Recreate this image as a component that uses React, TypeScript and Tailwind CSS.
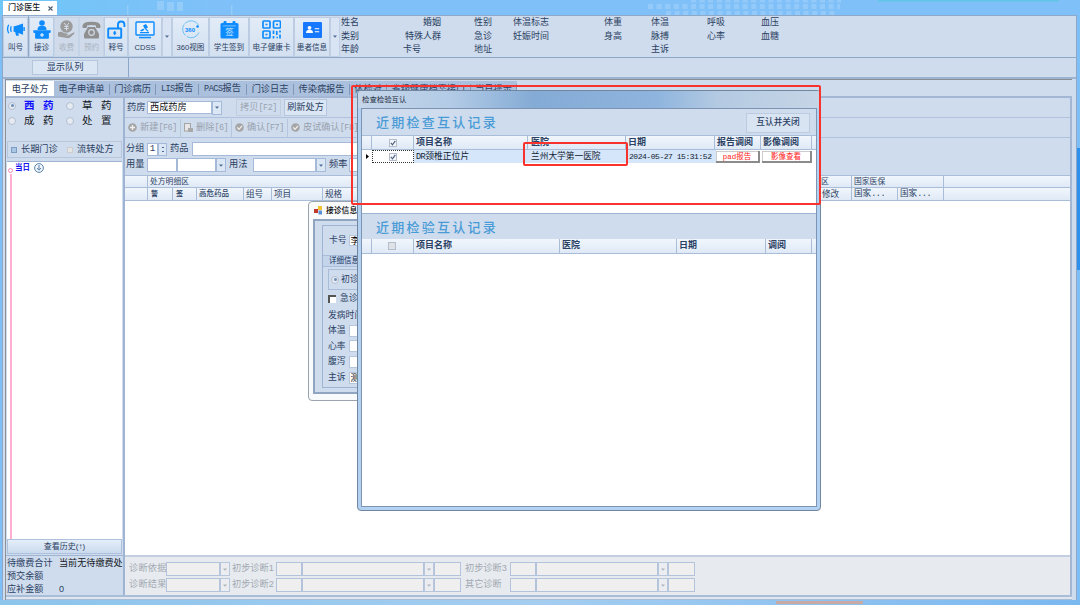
import React from 'react';
import { clsx } from 'clsx';

const Down = ({ c = '#4b6a95' }: { c?: string }) => (
  <svg width="4" height="3" viewBox="0 0 4 3" className="shrink-0">
    <path d="M0 .4h4L2 2.8z" fill={c} />
  </svg>
);

const B = '#0d8bff';
const icons: Record<string, React.ReactNode> = {
  horn: (
    <svg width="19" height="17" viewBox="0 0 20 18" fill={B}>
      <path d="M8 5.500v6l2 .2 8 2.800V2.700L10 5.300z" />
      <path d="M9.500 11h3.300l.7 4.500h-2.800z" />
      <rect x="18.300" y="6.300" width="1.600" height="4.400" rx=".7" />
      <path d="M5.600 5.500q-1.400 3 0 6M2.800 4q-2.400 4.500 0 9" fill="none" stroke={B} strokeWidth="1.400" />
    </svg>
  ),
  doctor: (
    <svg width="18" height="19" viewBox="0 0 18 19" fill={B}>
      <circle cx="9" cy="3" r="2.800" />
      <path d="M4.500 10q0-4 3-4h3q3 0 3 4zM.3 10.300h17.400v1.800q0 1-1 1h-.8V18q0 .8-.8.8H2.900q-.8 0-.8-.8v-4.900h-.8q-1 0-1-1z" />
      <path d="M9 13v4M7 15h4" stroke="#fff" strokeWidth="1" />
    </svg>
  ),
  fee: (
    <svg width="19" height="19" viewBox="0 0 19 19">
      <circle cx="9.500" cy="6.500" r="6.200" fill="#9b9b9b" />
      <path d="M7 3l2.500 3L12 3M9.500 6v4.500M7.300 6.500h4.400M7.300 8.500h4.400" stroke="#d3dbe6" fill="none" />
      <path d="M1 12.500q3-1.500 5 0 2 1.200 4.500 1 1 1-.5 1.500H7.500l3.500.5 5.500-3q1.500-.3 1 1L13 17.500q-1 .8-3 .6L1 16.500z" fill="#9b9b9b" />
    </svg>
  ),
  phone: (
    <svg width="19" height="18" viewBox="0 0 19 18">
      <path d="M.5 5q0-4.300 9-4.300t9 4.300v1.200q-.1.800-1 .8h-2.600q-.9 0-.9-1V4.600q-4.500-1.200-9 0V6q0 1-.9 1H1.500q-1 0-1-.8z" fill="#8f8f8f" />
      <path d="M6 6h7l4 7v3.500q0 1-1 1H3q-1 0-1-1V13z" fill="#8f8f8f" />
      <circle cx="9.500" cy="11.500" r="2.800" fill="none" stroke="#d3dbe6" strokeWidth="1.200" />
    </svg>
  ),
  unlock: (
    <svg width="19" height="19" viewBox="0 0 19 19" fill="none" stroke={B} strokeWidth="1.900">
      <rect x="1.200" y="8.500" width="13" height="9.300" rx=".6" />
      <path d="M11 8V4.500q0-3 3.200-3t3.200 3V7" />
      <path d="M7.700 11v4M6.200 13h3" strokeWidth="1.500" />
    </svg>
  ),
  cdss: (
    <svg width="20" height="18" viewBox="0 0 20 18" fill={B}>
      <rect x="1" y="1" width="18" height="13" rx=".8" fill="#e9f3fd" stroke={B} strokeWidth="1.400" />
      <path d="M8 4.500l3-1.500 2 3.500-3 1.700zM5 9.500l3.500-2 .8 1.400-2.800 1.600zM5 11h9v1.200H5zM11 7.500l2.700 2.500-1 .8-2.500-2.500z" />
      <rect x="4" y="15.800" width="12" height="1.500" />
    </svg>
  ),
  deg: (
    <svg width="20" height="19" viewBox="0 0 20 19">
      <path d="M17.500 5A8.500 8.500 0 1 0 18 12.500" fill="none" stroke="#6cc1f5" strokeWidth="1" strokeDasharray="16 1 12 2" />
      <text x="4" y="11.500" fontSize="6" fontWeight="700" fontFamily="Liberation Sans" fill={B}>360</text>
      <circle cx="16.600" cy="6.500" r="1.300" fill={B} />
    </svg>
  ),
  sign: (
    <svg width="19" height="18" viewBox="0 0 19 18">
      <rect x=".5" y="2" width="18" height="15.500" rx="1.500" fill={B} />
      <rect x="3.500" y="0" width="3" height="4.500" rx="1" fill={B} />
      <rect x="12.500" y="0" width="3" height="4.500" rx="1" fill={B} />
      <path d="M3 4.900h13" stroke="#c4e2ff" strokeWidth=".6" />
      <text x="5.200" y="14" fontSize="8.500" fontFamily="Noto Sans CJK SC" fill="#d9eeff">签</text>
    </svg>
  ),
  qr: (
    <svg width="19" height="19" viewBox="0 0 19 19" fill="none" stroke={B} strokeWidth="1.700">
      <rect x="1" y="1" width="7" height="7" rx=".8" />
      <rect x="11.500" y="1" width="7" height="7" rx=".8" />
      <rect x="1" y="11" width="7" height="7" rx=".8" />
      <path d="M3.500 4.500h2M14 4.500h2M3.500 14.500h2M11.500 10.500v3.500M11.500 16v2.500M14.800 11v4M18 10.500v2M18 14.500v4M14.500 17.500h1.500" />
    </svg>
  ),
  card: (
    <svg width="19" height="16" viewBox="0 0 19 16">
      <rect width="19" height="16" rx="1" fill="#1678ff" />
      <circle cx="6.500" cy="5.800" r="1.900" fill="#fff" />
      <path d="M3 11q0-3.200 3.500-3.200T10 11z" fill="#fff" />
      <path d="M11.800 6.800h4.400M11.800 9.800h4.400" stroke="#fff" strokeWidth="1.100" />
    </svg>
  ),
};

const Tool = ({ w, icon, label, off }: { w: string; icon: string; label: string; off?: boolean }) => (
  <div
    className={clsx(
      w,
      'flex h-[40px] shrink-0 flex-col items-center border whitespace-nowrap',
      off ? 'border-[#c5d3e6] bg-[#cfdbeb] text-[#a9b2c0]' : 'border-[#bccce2] bg-linear-to-b from-[#e2ecf8] to-[#d3e0f0]',
    )}
  >
    <div className="flex h-[23px] items-center justify-center pt-px">{icons[icon]}</div>
    <div className="text-[7.6px] leading-[13px]">{label}</div>
  </div>
);
const ToolArrow = () => (
  <div className="flex h-[40px] w-[10px] shrink-0 items-center justify-center border border-[#c0cfe4] bg-[#d8e4f3]">
    <Down />
  </div>
);

const infoCols: { w: string; rows: string[]; a?: string }[] = [
  { w: 'w-[62px]', rows: ['姓名', '类别', '年龄'] },
  { w: 'w-[38px]', rows: ['婚姻', '特殊人群', '卡号'], a: 'items-end' },
  { w: 'w-[72px]', rows: ['性别', '急诊', '地址'], a: 'pl-[33px]' },
  { w: 'w-[91px]', rows: ['体温标志', '妊娠时间', ''] },
  { w: 'w-[47px]', rows: ['体重', '身高', ''] },
  { w: 'w-[56px]', rows: ['体温', '脉搏', '主诉'] },
  { w: 'w-[54px]', rows: ['呼吸', '心率', ''] },
  { w: 'w-[54px]', rows: ['血压', '血糖', ''] },
];

const tabs: [string, string][] = [
  ['w-[56px]', '电子申请单'],
  ['w-[46px]', '门诊病历'],
  ['w-[43px]', 'LIS报告'],
  ['w-[48px]', 'PACS报告'],
  ['w-[47px]', '门诊日志'],
  ['w-[56px]', '传染病报告'],
  ['w-[37px]', '体检对'],
  ['w-[84px]', '省级健康档案接口'],
  ['w-[46px]', '当日提示'],
];

const Radio = ({ on }: { on?: boolean }) => (
  <span className="flex size-[8px] shrink-0 items-center justify-center rounded-full border border-[#b3bfd0] bg-[#e6ebf2]">
    {on && <span className="size-[3px] rounded-full bg-[#6a8cb8]" />}
  </span>
);
const Box = ({ w }: { w: string }) => <div className={clsx(w, 'h-[14px] shrink-0 border border-[#a5bad9] bg-white')} />;
const Arrow = ({ dim }: { dim?: boolean }) => (
  <div className={clsx('flex h-[14px] w-[10px] shrink-0 items-center justify-center border', dim ? 'border-[#b9c7dc] bg-[#ebedf0]' : 'border-[#a5bad9] bg-[#dce7f5]')}>
    <Down c={dim ? '#b0b5bd' : '#4b6a95'} />
  </div>
);
const Act = ({ w, label, kind }: { w: string; label: string; kind: string }) => (
  <div className={clsx(w, 'flex h-[18px] shrink-0 items-center gap-[3px] overflow-hidden border-r border-[#b6c6dd] pl-[3px]')}>
    <svg width="9" height="9" viewBox="0 0 9 9" className="shrink-0">
      {kind === 'doc' ? (
        <g><rect x=".5" y=".5" width="6" height="7.500" fill="#e6e6e6" stroke="#a5a5a5" /><path d="M4 5h5v4H4z" fill="#a8a8a8" /></g>
      ) : (
        <g><circle cx="4.500" cy="4.500" r="4.300" fill="#a6a6a6" /><path d={kind === 'add' ? 'M4.500 2v5M2 4.500h5' : 'M2.300 4.300l1.700 2 3-3.500'} fill="none" stroke="#f0f0f0" strokeWidth="1.300" /></g>
      )}
    </svg>
    <Mix t={label} />
  </div>
);
/* Latin runs are set in a narrow fixed pitch beside the Chinese glyphs */
const Mix = ({ t }: { t: string }) => (
  <span className="whitespace-nowrap">
    {t.split(/([\x20-\x7e]+)/).map((s, i) => (i % 2 ? <span key={i} className="font-['Liberation_Mono'] text-[8.5px] tracking-[-0.5px]">{s}</span> : s))}
  </span>
);

const Diag = ({ a, b, c }: { a: string; b: string; c: string }) => {
  const box = 'h-[14px] shrink-0 border border-[#b3c3dc] bg-[#efefef]';
  return (
    <div className="flex h-[16px] items-center">
      <div className="w-[37px] tracking-[0.2px]">{a}</div>
      <div className={clsx(box, 'w-[54px]')} /><Arrow dim />
      <div className="w-[46px] pl-[2px]">{b}</div>
      <div className={clsx(box, 'w-[26px]')} /><div className={clsx(box, 'w-[122px]')} /><Arrow dim /><div className={clsx(box, 'w-[27px]')} />
      <div className="w-[49px] pl-[4px]">{c}</div>
      <div className={clsx(box, 'w-[26px]')} /><div className={clsx(box, 'w-[122px]')} /><Arrow dim /><div className={clsx(box, 'w-[27px]')} />
    </div>
  );
};

const Th = ({ w, children, last }: { w: string; children?: React.ReactNode; last?: boolean }) => (
  <div className={clsx(w, 'flex h-full shrink-0 items-center overflow-hidden pl-[2px] whitespace-nowrap', !last && 'border-r border-[#a9bdd9]')}>{children}</div>
);
const Check = ({ on }: { on?: boolean }) => (
  <svg width="8" height="8" viewBox="0 0 8 8">
    <rect x=".5" y=".5" width="7" height="7" fill={on ? '#f4f6f9' : '#dfe3e8'} stroke="#b4bdc9" />
    {on && <path d="M1.800 3.800l1.700 2L6.300 1.800" stroke="#4e6285" fill="none" strokeWidth="1.200" />}
  </svg>
);
const heading = "pl-[14px] font-['Noto_Sans_CJK_SC'] text-[13px] font-medium tracking-[2.25px] text-[#489bd6]";
const head = 'flex shrink-0 border-b border-[#a9bdd9] bg-linear-to-b from-[#f1f6fc] to-[#dfe9f6]';

const Left = () => (
  <div className="flex w-[118px] shrink-0 flex-col border-r border-[#9fb4d2]">
    <div className="grid h-[43px] grid-cols-[58px_56px] content-start pl-[2px]">
      {['西药', '草药', '成药', '处置'].map((t, i) => (
        <div key={t} className={clsx('flex h-[15px] items-center text-[10.5px]', i === 0 ? 'font-bold text-[#1010ff]' : 'text-[#16191f]')}>
          <Radio on={i === 0} />
          <span className="pl-[8px] tracking-[8.5px] whitespace-nowrap">{t}</span>
        </div>
      ))}
    </div>
    <div className="mx-px flex h-[17px] items-center border border-[#b6c6dd] text-[9.2px] whitespace-nowrap">
      <span className="ml-[3px] size-[6px] border border-[#7d9cc4] bg-[#a9c6e4]" />
      <span className="ml-[4px] w-[46px]">长期门诊</span>
      <span className="size-[6px] border border-[#cdcdcd] bg-[#e4e4e4]" />
      <span className="ml-[4px]">流转处方</span>
    </div>
    <div className="mx-px mt-[3px] flex flex-1 border-t border-[#9fb4d2] bg-white">
      <div className="flex w-[7px] flex-col items-center pt-[6px]">
        <span className="size-[5px] shrink-0 rounded-full border border-[#f58ab8]" />
        <span className="mt-px w-[2px] flex-1 bg-[#ffb0d2]" />
      </div>
      <div className="flex h-[12px] items-center pl-px text-[7.5px] font-bold text-[#1414f0]">
        当日
        <svg width="10" height="10" viewBox="0 0 10 10" className="ml-[4px]" fill="none" stroke="#5a83ad">
          <circle cx="5" cy="5" r="4.400" fill="#f0f5fa" /><path d="M5 2v5M3 5l2 2.200L7 5" />
        </svg>
      </div>
    </div>
    <div className="mx-px flex h-[15px] shrink-0 items-center justify-center border border-[#aec1dc] bg-linear-to-b from-[#e4eef9] to-[#cbdaee] text-[8px]">查看历史(↑)</div>
    <div className="mt-px grid h-[40px] shrink-0 grid-cols-[52px_65px] content-start border-t border-[#9fb4d2] pt-px pl-px text-[9.1px] leading-[13px] whitespace-nowrap">
      <span>待缴费合计</span><span className="text-[#16191f]">当前无待缴费处</span>
      <span>预交余额</span><span />
      <span>应补金额</span><span>0</span>
    </div>
  </div>
);

const Right = () => (
  <div className="flex min-w-0 flex-1 flex-col border-l border-[#9fb4d2]">
    <div className="flex h-[20px] shrink-0 items-center border-b border-[#afc1dc] pl-[2px] text-[9.2px]">
      <span className="w-[20px]">药房</span>
      <div className="flex h-[13px] w-[65px] items-center border border-[#a5bad9] bg-white pl-[2px] text-[#101318]">西成药房</div>
      <Arrow />
      <div className="ml-[14px] flex h-[17px] w-[45px] items-center justify-center border border-[#c1cee0] text-[#9ba4b2]"><Mix t="拷贝[F2]" /></div>
      <div className="ml-[3px] flex h-[17px] w-[43px] items-center justify-center border border-[#b6c6dd] bg-[#dae6f4] whitespace-nowrap">刷新处方</div>
    </div>
    <div className="flex h-[20px] shrink-0 items-center border-b border-[#afc1dc] text-[9.2px] text-[#98a1ae]">
      <Act w="w-[56px]" label="新建[F6]" kind="add" />
      <Act w="w-[51px]" label="删除[6]" kind="doc" />
      <Act w="w-[56px]" label="确认[F7]" kind="ok" />
      <Act w="w-[90px]" label="皮试确认[F8]" kind="ok" />
    </div>
    <div className="mt-[3px] flex h-[16px] shrink-0 items-center pl-px text-[9.2px]">
      <span className="w-[21px]">分组</span>
      <div className="flex h-[13px] w-[11px] items-center justify-center border border-[#a5bad9] bg-white font-['Liberation_Mono']">1</div>
      <div className="flex h-[13px] w-[9px] flex-col items-center justify-center gap-[3px] border border-[#a5bad9] bg-[#dce7f5]">
        <i className="h-px w-[2px] bg-[#4b6a95]" /><i className="h-px w-[2px] bg-[#4b6a95]" />
      </div>
      <span className="ml-[3px] w-[22px]">药品</span>
      <Box w="w-[180px]" />
    </div>
    <div className="flex h-[16px] shrink-0 items-center pl-px text-[9.2px]">
      <span className="w-[21px]">用量</span>
      <Box w="w-[30px]" /><Box w="w-[39px]" /><Arrow />
      <span className="ml-[3px] w-[24px]">用法</span>
      <Box w="w-[63px]" /><Arrow />
      <span className="ml-[3px] w-[20px]">频率</span>
      <Box w="w-[60px]" />
    </div>
    <div className={clsx(head, 'mt-[2px] h-[13px] border-t text-[7.8px]')}>
      <Th w="w-[23px]" /><Th w="w-[704px]"><span className="flex-1">处方明细区</span><span className="w-[30px]">区</span></Th>
      <Th w="w-[92px]">国家医保</Th><Th w="flex-1" last />
    </div>
    <div className={clsx(head, 'h-[13px] text-[8.6px]')}>
      <Th w="w-[23px]" /><Th w="w-[25px]"><b className="pl-px text-[7px]">警</b></Th><Th w="w-[24px]"><b className="pl-px text-[7px]">签</b></Th>
      <Th w="w-[47px]"><span className="text-[7.5px] font-medium">高危药品</span></Th><Th w="w-[28px]">组号</Th><Th w="w-[51px]">项目</Th>
      <Th w="w-[497px]">规格</Th><Th w="w-[32px]">修改</Th><Th w="w-[46px]"><Mix t="国家..." /></Th><Th w="w-[46px]"><Mix t="国家..." /></Th><Th w="flex-1" last />
    </div>
    <div className="flex-1 bg-white" />
    <div className="flex h-[40px] shrink-0 flex-col border-t-2 border-[#c3cfe1] bg-[#e7ebef] pt-[4px] pl-[4px] text-[9.2px] whitespace-nowrap text-[#a2a8b2]">
      <Diag a="诊断依据" b="初步诊断1" c="初步诊断3" />
      <Diag a="诊断结果" b="初步诊断2" c="其它诊断" />
    </div>
  </div>
);

const VisitForm = () => (
  <div className="absolute top-[201px] left-[308px] flex h-[200px] w-[120px] flex-col rounded-[4px] border border-[#9ba3ad] bg-[#f8fafc]">
    <div className="flex h-[17px] shrink-0 items-center pl-[5px] text-[7.8px] font-medium text-black">
      <svg width="9" height="9" viewBox="0 0 9 9" className="mr-[3px]">
        <path d="M4 0h4v4H4z" fill="#f2c230" /><path d="M0 3h4v4H0z" fill="#c0392b" /><path d="M4.500 4.500H8v4H4.500z" fill="#5b8fd6" />
      </svg>
      接诊信息
    </div>
    <div className="ml-[4px] flex h-[175px] flex-col border-2 border-r-0 border-[#8fa5c2] bg-[#cfdcee] pt-[4px] pl-[7px] text-[8.8px]">
      <div className="flex h-[163px] flex-col border border-r-0 border-[#9fb4d2] whitespace-nowrap">
        <div className="flex h-[29px] shrink-0 items-center pl-[6px]">卡号<span className="ml-[2px] h-[11px] border border-[#b6c6dd] bg-white pl-px leading-[10px] text-black">李</span></div>
        <div className="flex h-[12px] shrink-0 items-center border-y border-[#a9bdd9] bg-[#c4d4ea] pl-[6px] text-[7.5px] text-[#10305e]">详细信息</div>
        <div className="mt-[2px] ml-[5px] flex h-[21px] shrink-0 items-center gap-[2px] border border-r-0 border-[#a9bdd9] pl-[2px]"><Radio on />初诊</div>
        <div className="flex h-[18px] shrink-0 items-center pl-[5px]"><span className="mr-[4px] size-[8px] border-t-2 border-l-2 border-[#555] bg-white" />急诊</div>
        <div className="flex h-[15px] shrink-0 items-center pl-[5px]">发病时间</div>
        {['体温', '心率', '腹泻', '主诉'].map((t) => (
          <div key={t} className="flex h-[15.6px] shrink-0 items-center pl-[5px]">
            {t}<span className="ml-[3px] h-[12px] flex-1 border border-[#b6c6dd] bg-white pl-px leading-[10px] text-black">{t === '主诉' ? '测' : ''}</span>
          </div>
        ))}
      </div>
    </div>
  </div>
);

const Dialog = () => (
  <div className="absolute top-[90px] left-[357px] flex h-[421px] w-[464px] flex-col rounded-[4px] border border-[#72879f] bg-[#b3d2f2] px-[3px] pb-[3px]">
    <div className="-mx-[3px] flex h-[17px] shrink-0 items-center rounded-t-[3px] bg-[linear-gradient(90deg,#c5d6e9_0%,#b3cbe6_20%,#84abd5_38%,#8fb5de_65%,#b4cae2_78%,#c6d5e6_100%)] pl-[4px] text-[7.4px] text-[#1c2c40]">检查检验互认</div>
    <div className="flex min-h-0 flex-1 flex-col border border-[#7d94b2] bg-white">
      <div className="flex h-[26px] shrink-0 items-center justify-between bg-[#cfdced]">
        <span className={heading}>近期检查互认记录</span>
        <button className="mt-px mr-[6px] h-[20px] w-[64px] border border-[#bccbe0] bg-[#d8e4f2] text-[8.7px] font-medium">互认并关闭</button>
      </div>
      <div className={clsx(head, 'h-[15px] border-t text-[9px] font-bold')}>
        <Th w="w-[10px]" /><Th w="w-[42px]"><span className="pl-[15px]"><Check on /></span></Th><Th w="w-[114px]">项目名称</Th><Th w="w-[98px]"><span className="pl-px">医院</span></Th>
        <Th w="w-[89px]">日期</Th><Th w="w-[46px]">报告调阅</Th><Th w="w-[51px]">影像调阅</Th><Th w="flex-1" last />
      </div>
      <div className="flex h-[13px] shrink-0 items-center text-[8.8px] whitespace-nowrap text-[#101c30]">
        <div className="w-[10px] pl-[4px]"><svg width="3" height="5" viewBox="0 0 3 5"><path d="M0 0l3 2.500L0 5z" /></svg></div>
        <div className="h-[13px] w-[42px] border border-dotted border-[#333] pt-[2px] pl-[16px]"><Check on /></div>
        <div className="flex h-full w-[115px] items-center bg-[#d5e5fa] pl-[2px]"><Mix t="DR颈椎正位片" /></div>
        <div className="flex h-full w-[98px] items-center bg-[#d5e5fa] pl-[2px] text-[8.7px]">兰州大学第一医院</div>
        <div className="flex h-full w-[89px] items-center bg-[#d5e5fa] pl-[2px] font-['Liberation_Mono'] text-[8px] tracking-[-0.46px]">2024-05-27 15:31:52</div>
        {['pad报告', '影像查看'].map((t, i) => (
          <div key={t} className={clsx(i ? 'w-[50px]' : 'mr-[2px] w-[44px]', 'h-[12px] border-r-2 border-b-2 border-[#8b8b8b] bg-white text-center text-[7.5px] leading-[11px] text-[#ff1a1a] shadow-[inset_1px_1px_0_#ccc]')}>
            {i ? t : <><span className="font-['Liberation_Mono']">pad</span>报告</>}
          </div>
        ))}
      </div>
      <div className="h-[51px] shrink-0 border-b border-[#9fb4d2]" />
      <div className="flex h-[25px] shrink-0 items-center bg-[#cfdced]"><span className={heading}>近期检验互认记录</span></div>
      <div className={clsx(head, 'h-[15px] text-[9px] font-bold')}>
        <Th w="w-[10px]" /><Th w="w-[42px]"><span className="pl-[14px]"><Check /></span></Th><Th w="w-[146px]">项目名称</Th><Th w="w-[117px]">医院</Th>
        <Th w="w-[89px]">日期</Th><Th w="w-[46px]">调阅</Th><Th w="flex-1" last />
      </div>
    </div>
  </div>
);

export default function App() {
  return (
    <div className="relative flex h-[605px] w-[1080px] flex-col overflow-hidden bg-[#7fbff7] font-['Liberation_Sans','Noto_Sans_CJK_SC',sans-serif] text-[#2b4163]">
      <div className="flex h-[15px] shrink-0 bg-linear-to-r from-[#6fc6f8] via-[#7fc0f9] via-20% to-[#7fc0f9] pl-[3px]">
        <div className="mt-px flex w-[54px] items-center justify-between bg-white px-[5px] text-[8.1px] font-medium whitespace-nowrap text-[#14181f]">
          门诊医生
          <svg width="5" height="5" viewBox="0 0 5 5" className="-mr-px"><path d="M.5.5l4 4M4.500.5l-4 4" stroke="#4d5b70" strokeWidth="1.100" /></svg>
        </div>
        <svg width="1010" height="15" viewBox="0 0 1010 15" className="ml-[10px]" fill="#a5d3fa">
          <path d="M60 5h1.500v10H60zM164 5h1.500v10h-1.500zM90 1h7v9h-7zM100 2h7v9h-7zM110 2h6v9h-6z" opacity=".55" />
          <path d="M581 6.500h192M599 13.500h170M624 0h150" stroke="#a8d4fa" strokeWidth="5" strokeDasharray="5 3.600" opacity=".5" />
          <path d="M811 0h181v1.500H811z" fill="#62c6e6" />
        </svg>
      </div>
      <div className="mr-[3px] ml-[2px] flex h-[585px] shrink-0 flex-col border-x border-[#8ea8ca] bg-[#cfdced]">
        <div className="flex h-[43px] shrink-0 items-center border-y border-[#8ea8ca]">
          <Tool w="w-[25px]" icon="horn" label="叫号" />
          <div className="h-full w-px bg-[#8ea8ca]" />
          <Tool w="w-[25px]" icon="doctor" label="接诊" />
          <Tool w="w-[25px]" icon="fee" label="收费" off />
          <Tool w="w-[25px]" icon="phone" label="预约" off />
          <Tool w="w-[24px]" icon="unlock" label="释号" />
          <Tool w="w-[34px]" icon="cdss" label="CDSS" />
          <ToolArrow />
          <Tool w="w-[37px]" icon="deg" label="360视图" />
          <Tool w="w-[40px]" icon="sign" label="学生签到" />
          <Tool w="w-[45px]" icon="qr" label="电子健康卡" />
          <Tool w="w-[36px]" icon="card" label="患者信息" />
          <ToolArrow />
          <div className="ml-px flex text-[9px] whitespace-nowrap">
            {infoCols.map((c, i) => (
              <div key={i} className={clsx('flex flex-col', c.w, c.a)}>
                {c.rows.map((r, j) => (
                  <span key={j} className={clsx('h-[13.500px] leading-[13.500px]', r === '卡号' && 'mr-[20px]')}>{r}</span>
                ))}
              </div>
            ))}
          </div>
        </div>
        <div className="flex h-[21px] shrink-0 items-center border-b-2 border-[#9db3d2]">
          <div className="flex h-full w-[126px] items-center border-r border-[#8ea8ca] pl-[29px]">
            <div className="flex h-[15px] w-[66px] items-center justify-center border border-[#b6c6dd] bg-[#dae6f4] text-[9.2px]">显示队列</div>
          </div>
        </div>
        <div className="mr-[4px] ml-[2px] flex min-h-0 flex-1 flex-col border-t border-l border-[#8b8f96]">
          <div className="mt-px flex h-[15px] shrink-0 text-[9.2px] leading-[15px] whitespace-nowrap">
            <div className="flex w-[48px] items-center justify-center bg-white pt-px">电子处方</div>
            <div className="flex bg-[#abc0dc] pt-px">
              {tabs.map(([w, t]) => (
                <div key={t} className={clsx(w, 'flex items-center justify-center')}>
                  <span className="flex-1 text-center"><Mix t={t} /></span>
                  <i className="h-[11px] w-px bg-[#7f97b9]" />
                </div>
              ))}
            </div>
          </div>
          <div className="flex min-h-0 flex-1 border-t-2 border-r-2 border-[#a3b7d4]">
            <Left />
            <Right />
          </div>
          <div className="h-[5px] shrink-0 border-t-2 border-b border-[#a9bcd8] bg-[#dfe6ee]" />
        </div>
      </div>
      <div className="flex h-[5px] bg-linear-to-r from-[#8cc4ec] via-[#a4cdf0] to-[#7ab8f0] pl-[776px]"><div className="mt-px h-[3px] w-[87px] bg-[#c9a9a4]" /></div>
      <div className="absolute top-[148px] right-0 h-[122px] w-[3px] bg-[#2b90ee]" />
      <VisitForm />
      <Dialog />
      <div className="absolute top-[85px] left-[351px] h-[120px] w-[470px] rounded-[2px] border-2 border-[#f8322c]" />
      <div className="absolute top-[142px] left-[523px] h-[24px] w-[105px] rounded-[2px] border-2 border-[#f8322c]" />
    </div>
  );
}
